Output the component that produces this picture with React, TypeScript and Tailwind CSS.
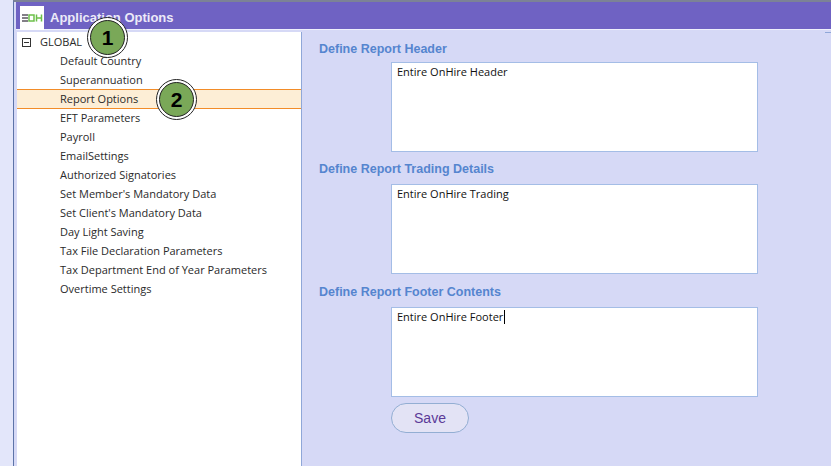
import React from 'react';

const items = [
  'Default Country',
  'Superannuation',
  'Report Options',
  'EFT Parameters',
  'Payroll',
  'EmailSettings',
  'Authorized Signatories',
  "Set Member's Mandatory Data",
  "Set Client's Mandatory Data",
  'Day Light Saving',
  'Tax File Declaration Parameters',
  'Tax Department End of Year Parameters',
  'Overtime Settings',
];

const Badge = ({ n, className }: { n: number; className: string }) => (
  <div
    className={`absolute flex h-[41px] w-[41px] items-center justify-center rounded-full border-[1.5px] border-[#222] bg-white ${className}`}
  >
    <div className="flex h-[35px] w-[35px] items-center justify-center rounded-full border-[1.5px] border-[#222] bg-[#7aa858] font-['Liberation_Sans',sans-serif] text-[21px] font-bold text-black">
      {n}
    </div>
  </div>
);

const Section = ({
  title,
  text,
  caret,
  mt,
  mb,
}: {
  title: string;
  text: string;
  caret?: boolean;
  mt: string;
  mb: string;
}) => (
  <div className={mb}>
    <div className="pl-[17px] font-['Liberation_Sans',sans-serif] text-[12.5px] leading-[16px] font-bold text-[#5585cf]">
      {title}
    </div>
    <div
      className={`${mt} ml-[89px] h-[90px] w-[367px] border border-[#a4bde6] bg-white px-[5px] py-px font-['Open_Sans',sans-serif] text-[11px] leading-[15px] text-[#111]`}
    >
      {text}
      {caret && <span className="ml-[0.5px] inline-block h-[14px] w-px bg-black align-[-3px]" />}
    </div>
  </div>
);

const App = () => (
  <div className="relative flex h-[466px] w-[831px] flex-col overflow-hidden bg-[#e3e6fa] pl-[13px] font-['Open_Sans',sans-serif]">
    <div className="flex h-full flex-col border-l border-[#5d74a8] border-t-2 border-t-[#7c8296] bg-[#d6d9f6] pl-[2px]">
      <div className="flex h-[28px] shrink-0 items-center border-b border-[#eef0fc] bg-[#6f62c3] pl-[4px]">
        <div className="mt-[5px] flex h-[24px] w-[24px] items-center justify-center bg-white">
          <svg width="22" height="10" viewBox="0 0 22 10">
            <path d="M1 2h6M1 5h6M1 8h6" stroke="#5b5560" strokeWidth="1.4" />
            <rect x="8" y="2" width="5" height="6" fill="none" stroke="#6cc04a" strokeWidth="1.5" />
            <path d="M15.5 1.5v7M20.5 1.5v7M15.5 5h5" stroke="#6cc04a" strokeWidth="1.5" />
          </svg>
        </div>
        <div className="mt-[4px] ml-[6px] font-['Liberation_Sans',sans-serif] text-[13px] font-bold text-[#eceaf8]">
          Application Options
        </div>
      </div>
      <div className="flex min-h-0 flex-1 pt-[2px]">
        <div className="ml-px w-[284px] shrink-0 bg-white pt-px text-[11px] text-[#2a2a2a]">
          <div className="flex h-[19px] items-center">
            <div className="ml-[5px] flex h-[9px] w-[9px] items-center justify-center border border-[#333]">
              <div className="h-px w-[5px] bg-[#333]" />
            </div>
            <span className="ml-[9px]">GLOBAL</span>
          </div>
          {items.map(item => (
            <div
              key={item}
              className={
                item === 'Report Options'
                  ? 'mt-[-1px] flex h-[20px] items-center border-y border-[#f28c28] bg-[#fdeed6] pl-[43px]'
                  : 'flex h-[19px] items-center pl-[43px]'
              }
            >
              {item}
            </div>
          ))}
        </div>
        <div className="w-px shrink-0 bg-[#8fa7d8]" />
        <div className="flex-1 pt-[9px]">
          <Section title="Define Report Header" text="Entire OnHire Header" mt="mt-[5px]" mb="mb-[9px]" />
          <Section title="Define Report Trading Details" text="Entire OnHire Trading" mt="mt-[7px]" mb="mb-[10px]" />
          <Section title="Define Report Footer Contents" text="Entire OnHire Footer" caret mt="mt-[7px]" mb="mb-[6px]" />
          <button className="ml-[89px] h-[30px] w-[78px] rounded-full border border-[#93aed3] bg-[#e3e3f5] font-['Liberation_Sans',sans-serif] text-[14px] text-[#5b3a98]">
            Save
          </button>
        </div>
      </div>
    </div>
    <div className="absolute top-[32px] right-0 h-px w-[6px] bg-[#8fa7d8]" />
    <Badge n={1} className="top-[17px] left-[87px]" />
    <Badge n={2} className="top-[79px] left-[156px]" />
  </div>
);

export default App;
